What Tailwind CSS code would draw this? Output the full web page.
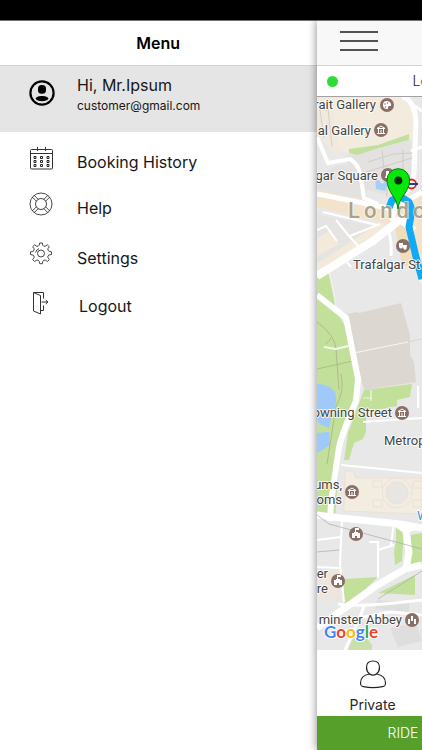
<!DOCTYPE html>
<html lang="en">
<head>
  <meta charset="UTF-8">
  <meta name="viewport" content="width=device-width, initial-scale=1">
  <title>Menu</title>
  <script src="https://cdn.jsdelivr.net/npm/@tailwindcss/browser@4"></script>
</head>
<body class="min-h-screen flex flex-col bg-white font-[Inter,sans-serif] text-neutral-900 overflow-x-hidden">
  <div class="h-5 bg-black shrink-0"></div>

  <div class="flex-1 flex overflow-hidden">
    <!-- Drawer -->
    <aside class="w-3/4 flex flex-col">
      <header class="h-[46px] flex items-center justify-center border-t border-b border-t-neutral-500 border-b-neutral-300">
        <h1 class="text-base font-semibold text-black">Menu</h1>
      </header>

      <section class="h-[66px] bg-[#e5e5e5] flex items-start gap-[21px] pt-[7px] pl-7">
        <svg class="size-7 shrink-0 mt-[6px]" viewBox="0 0 28 28" fill="none">
          <circle cx="14" cy="14" r="11.6" stroke="#000" stroke-width="2.2"/>
          <rect x="10" y="6" width="8" height="8.800" rx="3.600" fill="#000"/>
          <path d="M7.500 19.800C8 17.700 11 16.900 14 16.900s6 .8 6.500 2.900c-.8 1.700-3.500 2.400-6.500 2.400s-5.700-.7-6.500-2.400z" fill="#000"/>
        </svg>
        <div>
          <p class="text-base leading-6">Hi, Mr.Ipsum</p>
          <p class="text-xs leading-[18px]">customer@gmail.com</p>
        </div>
      </section>

      <nav class="pt-[6px] text-base">
        <a href="#history" class="h-12 flex items-center gap-6 pl-[29px]">
          <svg class="size-6 shrink-0 mb-2" viewBox="0 0 24 24" fill="none" stroke="#333" stroke-width="1">
            <rect x="1.500" y="3.500" width="22" height="19.500" rx="1"/>
            <path d="M1.500 7.500h22M8.500 1v4M16.500 1v4"/>
            <g stroke="#222">
              <path d="M5 10.500h2v2H5zM11.500 10.500h2v2h-2zM18 10.500h2v2h-2zM5 14.500h2v2H5zM11.500 14.500h2v2h-2zM18 14.500h2v2h-2zM5 18.500h2v2H5zM11.500 18.500h2v2h-2zM18 18.500h2v2h-2z"/>
            </g>
          </svg>
          <span>Booking History</span>
        </a>
        <a href="#help" class="h-11 flex items-center gap-6 pl-[29px]">
          <svg class="size-6 shrink-0 mb-2" viewBox="0 0 24 24" fill="none" stroke="#333" stroke-width=".9">
            <circle cx="12" cy="12" r="11"/>
            <circle cx="12" cy="12" r="5.500"/>
            <path d="M3.400 5.200l4.200 4.200M5.200 3.400l4.200 4.200M20.600 5.200l-4.200 4.200M18.800 3.400l-4.200 4.200M3.400 18.800l4.200-4.200M5.200 20.600l4.200-4.200M20.600 18.800l-4.200-4.200M18.800 20.600l-4.200-4.200"/>
          </svg>
          <span>Help</span>
        </a>
        <a href="#settings" class="h-14 flex items-center gap-6 pl-[29px]">
          <svg class="size-6 shrink-0 mb-2" viewBox="0 0 24 24" fill="none" stroke="#333" stroke-width=".9" stroke-linejoin="round">
            <path d="M10.700 1h2.600q.2 2.800 1.500 3.300t3.600-1.500l1.900 1.900q-2 2.200-1.400 3.500t3.600 1.700v2.600q-3 .2-3.600 1.500t1.400 3.600l-1.900 1.900q-2.200-2-3.500-1.400t-1.600 3.600h-2.600q-.3-3-1.600-3.600t-3.500 1.400l-1.900-1.900q2-2.200 1.400-3.500t-3.600-1.600v-2.600q3-.3 3.600-1.600t-1.400-3.600l1.900-1.900q2.200 2 3.500 1.500t1.600-3.300z"/>
            <circle cx="12" cy="11.500" r="3.500"/>
            <path d="M6.600 10.500A5.600 5.600 0 0 1 10 6.600"/>
          </svg>
          <span>Settings</span>
        </a>
        <a href="#logout" class="h-10 flex items-center gap-[26px] pl-[29px]">
          <svg class="size-6 shrink-0 mb-[6px]" viewBox="0 0 24 24" fill="none" stroke="#333" stroke-width="1">
            <path d="M4.500 1.500v18.500l7 3V4.500zM4.500 1.500h10v6M11.500 19.500h3v-5M12.500 11h6.500M16.800 9l2.200 2-2.200 2"/>
          </svg>
          <span>Logout</span>
        </a>
      </nav>
    </aside>

    <!-- Page pushed aside by the drawer -->
    <main class="flex-1 min-w-0 flex flex-col bg-white overflow-hidden shadow-[-1px_0_8px_rgba(0,0,0,0.4)]">
      <header class="h-[46px] shrink-0 bg-[#f8f8f8] border-t border-b border-t-neutral-500 border-b-neutral-300 flex items-center pl-[23px]">
        <button type="button" aria-label="Open menu" class="w-[38px] flex flex-col gap-[7px] pb-[5px]">
          <span class="h-[2px] bg-neutral-600"></span>
          <span class="h-[2px] bg-neutral-600"></span>
          <span class="h-[2px] bg-neutral-600"></span>
        </button>
      </header>

      <div class="h-[31px] shrink-0 flex items-center gap-[75px] pl-[10px] border-b border-neutral-400">
        <span class="size-[11px] shrink-0 rounded-full bg-[#2fdb35]"></span>
        <span class="text-sm font-light whitespace-nowrap text-neutral-800">Lo</span>
      </div>

      <div class="flex-1 min-h-[553px] overflow-hidden bg-[#e8e8e8]">
        <svg class="h-[553px] w-[400px]" viewBox="317 97 400 553" font-family="Roboto, sans-serif">
          <rect x="317" y="97" width="400" height="553" fill="#e8e8e8"/>

          <!-- built-up areas -->
          <path d="M331 97h71l11 14v27l-60 17-14-5z" fill="#f4ebdf"/>
          <path d="M317 97h13l11 62-24-22z" fill="#f0e9dd"/>
          <path d="M346 155l65-15v45l-15 12-42-10z" fill="#e3e2e1"/>
          <path d="M317 176l20-10 25-4 6 38-51-10z" fill="#e3e2e1"/>
          <path d="M317 190l77 16 28-16v65l-28-30-77-18z" fill="#f3e3cb"/>
          <path d="M317 214l62 14-62 35z" fill="#e6e4e2"/>
          <path d="M317 238l14-8 8 14-22 12z" fill="#f4eadb"/>
          <path d="M394 222l17 5 7 45-16-8z" fill="#f1dcbc"/>
          <path d="M317 264l64-42 7 8-71 48z" fill="#f4eadb"/>

          <!-- parks and water -->
          <path d="M349 149l29-4 31-11v6l-30 8-22 7-8-2z" fill="#c3df9e"/>
          <path d="M317 278l11-7 9 42 16 26 5 52-18 60-5 67h-18z" fill="#c2e09a"/>
          <path d="M317 384c8 0 14 3 18 8 2 7 1 15-2 19l-4 17-8-3-4-4zM317 433l12-1 1 13-8 5-5 3z" fill="#9fc8fb"/>
          <path d="M364 390l48-6-2 13-13 3v6l-31 6v20l-3 7-9 4-5 17h-5l4-27z" fill="#c2e09a"/>
          <path d="M317 322q18 13 19 27l3 41M317 369l36-8M341 374q4 17-5 32l-9 58M326 344l5-6" stroke="#a9a985" stroke-width=".7" fill="none"/>
          <path d="M324 347l12 2 12-3" stroke="#f4f7ee" stroke-width="2" fill="none"/>
          <path d="M329 272q5 17 7 36M363 398h9M371 390v11" stroke="#eef5e2" stroke-width="1.200" fill="none"/>

          <!-- large blocks -->
          <path d="M345 315l10-3 4 1 42-10 7 25 2 7v20l4 7 2 20-52 8z" fill="#dcd7d1"/>
          <path d="M354 353l54-11" stroke="#f8f5ee" stroke-width="1.200"/>
          <path d="M408 342l14-3" stroke="#d8d4d0" stroke-width="1"/>
          <g fill="#f2ece1" stroke="#e8dfd2" stroke-width=".8">
            <path d="M345 471h8l3 7h66v36l-78-3z"/>
            <circle cx="397" cy="493" r="15"/>
            <circle cx="397" cy="493" r="11" fill="#e8e6e2"/>
            <path d="M373 481h9v6h-9zM373 500h9v7h-9zM413 481h9v7h-9zM413 500h9v7h-9z"/>
          </g>
          <path d="M317 571h23v29h-23z" fill="#eee6dd"/>
          <path d="M396 528l8 2-2 31-7 4-1-14 2-9zM411 535l11-2v32l-8 2-5-5z" fill="#c2e09a"/>
          <path d="M344 579l34-2-24 23-10 3zM384 590l31-15v20l-37-2z" fill="#c2e09a"/>
          <path d="M348 650l8-20 4-2 12 17v5z" fill="#c9dfac"/>
          <path d="M377 600l32 3v9l-34-3zM390 628l26-5 6 18-24 6z" fill="#dedede"/>

          <!-- roads -->
          <g fill="none" stroke="#fff">
            <path d="M402 94q13 9 14 27l-2 53q-3 17-16 25l-6 22" stroke-width="5"/>
            <path d="M317 137l11 26 22-4q8 5 10 14l4 25 14 6" stroke-width="4"/>
            <path d="M402 97l20 14M411 151l11-4" stroke-width="3"/>
            <path d="M317 194l76 15 29-17" stroke-width="5"/>
            <path d="M323 212l54 13M349 236l-13-16M349 236l12 13M350 236l30-12M317 230l9-4 11 15" stroke-width="2"/>
            <path d="M345 260l6 7" stroke-width="2"/>
            <path d="M317 276l56-35 28-22 13 12" stroke-width="8"/>
            <path d="M388 231q4 8 3 25M414 260l8 22" stroke-width="3"/>
            <path d="M317 295l29 23 12 61-2 22q-13 30-17 46l-8 56-1 18" stroke-width="6"/>
            <path d="M341 465l81 8M363 422l59-4M418 386v22" stroke-width="2"/>
            <path d="M317 515l24 3 59 6 22 4" stroke-width="7"/>
            <path d="M342 519l-2 45 4 38M317 540l24-3M317 567l23 1M369 542h9v36M378 550l16-5M394 522l-3 23" stroke-width="2"/>
            <path d="M405 525l4 27-3 17M422 565l-17 4-29 17-59 42" stroke-width="7"/>
            <path d="M395 525l10 7 15-5" stroke-width="3"/>
            <path d="M338 604q20 4 84-4M364 606l-5 14-14 30M359 618l32-6 31 3" stroke-width="3"/>
          </g>
          <path d="M317 515l12 9 93 25M378 599l44-28M317 552l22-2" stroke="#aaa" stroke-width=".7" fill="none"/>
          <path d="M327 99l5 47M319 103l5 35M368 162l25-8 19-1M366 172l46-14M382 150l5 47M403 150v30" stroke="#c9c3ba" stroke-width=".7" fill="none"/>
          <path d="M375 176l7 8 8-6-5 13-9-2zM399 180l9-5-3 10z" fill="#a6cff7"/>

          <!-- place badges -->
          <g fill="#8a6f67">
            <circle cx="387" cy="105" r="7"/>
            <circle cx="381" cy="130" r="7"/>
            <circle cx="388" cy="175" r="7"/>
            <circle cx="403" cy="246" r="7"/>
            <circle cx="402" cy="413" r="7"/>
            <circle cx="352" cy="492" r="7"/>
            <circle cx="356" cy="534" r="7"/>
            <circle cx="338" cy="581" r="7"/>
            <circle cx="412" cy="620" r="7"/>
          </g>
          <path d="M387 101a4 4 0 1 0 0 8c2 0 0-2 2-3h2a4 4 0 0 0-4-5z" fill="#fff"/>
          <g fill="#8a6f67"><circle cx="385" cy="104" r=".8"/><circle cx="387.500" cy="103" r=".8"/><circle cx="385.500" cy="107" r=".8"/></g>
          <g fill="none" stroke="#fff" stroke-width="1">
            <path d="M377 128.500l4-2.500 4 2.500zM378.500 129v4M383.500 129v4M377 133.500h8M381 130v3"/>
            <path d="M398 411.500l4-2.500 4 2.500zM399.500 412v4M404.500 412v4M398 416.500h8M402 413v3"/>
            <path d="M348 490.500l4-2.500 4 2.500zM349.500 491v4M354.500 491v4M348 495.500h8M352 492v3"/>
          </g>
          <g fill="#fff">
            <path d="M352 538v-5h2v-1h1v-4h4v2h-3v2h2v1h2v5h-3v-2h-2v2z"/>
            <path d="M334 585v-5h2v-1h1v-4h4v2h-3v2h2v1h2v5h-3v-2h-2v2z"/>
            <path d="M408 619h2v5h-2zM411 616h2v5h-2zM414 619h2v5h-2z"/>
            <path d="M399 243h4v4q-2 3-4 0zM403 245h4l-.5 4q-2 2-3.500-1z"/>
            <path d="M386 171h3v3l2 4h-6l1-3z"/>
          </g>

          <!-- route -->
          <path d="M389 208l3-8 9-3 8 5 3 8-3 17 7 30 6 22" fill="none" stroke="#12a9f5" stroke-width="7" stroke-linejoin="round"/>

          <text x="348" y="218" font-size="22" font-weight="500" letter-spacing="4" fill="#a2967d" fill-opacity=".9" stroke="#fff" stroke-opacity=".6" stroke-width="2" paint-order="stroke">Londo</text>

          <!-- underground sign -->
          <circle cx="411.500" cy="184" r="4.500" fill="#fff" stroke="#dc241f" stroke-width="1.800"/>
          <path d="M405 184h13" stroke="#1c3f94" stroke-width="2"/>

          <!-- pickup pin -->
          <path d="M398 209c-1-12-11-17-11-29a11.300 11.300 0 0 1 22.600 0c0 12-10.600 17-11.600 29z" fill="#08e60b" stroke="#087a10" stroke-width="1"/>
          <circle cx="398.300" cy="180.500" r="4" fill="#082c08"/>

          <!-- place names -->
          <g font-size="13" fill="#454545" stroke="#fff" stroke-opacity=".8" stroke-width="2" stroke-linejoin="round" paint-order="stroke">
            <g text-anchor="end">
              <text x="376" y="109">rait Gallery</text>
              <text x="371" y="135">al Gallery</text>
              <text x="378" y="180">gar Square</text>
              <text x="392" y="417">owning Street</text>
              <text x="342" y="489">ums,</text>
              <text x="342" y="504">oms</text>
              <text x="328" y="578">er</text>
              <text x="328" y="593">re</text>
              <text x="402" y="624">minster Abbey</text>
            </g>
            <text x="353" y="269">Trafalgar St</text>
            <text x="384" y="445">Metrop</text>
            <text x="417" y="520" fill="#3b9bd4">W</text>
          </g>

          <text x="324" y="638" font-family="Lato, sans-serif" font-size="17" font-weight="700" stroke="#fff" stroke-width="2" paint-order="stroke"><tspan fill="#4285f4">G</tspan><tspan fill="#ea4335">o</tspan><tspan fill="#fbbc05">o</tspan><tspan fill="#4285f4">g</tspan><tspan fill="#34a853">l</tspan><tspan fill="#ea4335">e</tspan></text>
        </svg>
      </div>

      <button type="button" class="h-[66px] shrink-0 w-28 flex flex-col items-center justify-end gap-1 text-sm text-neutral-800">
        <svg class="size-8" viewBox="0 0 32 32" fill="none" stroke="#222" stroke-width="1.200">
          <path d="M12.500 16c-1.800-1.500-3-3.600-3-6.500 0-3.900 2.500-6.500 6.500-6.500s6.500 2.600 6.500 6.500c0 2.900-1.200 5-3 6.500 5 .8 9 3.700 9 9 0 2.600-.5 3.200-3 3.700-5 1-14 1-19 0-2.500-.5-3-1.100-3-3.700 0-5.300 4-8.200 9-9z"/>
          <path d="M12.500 16q3.500 2.400 7 0"/>
        </svg>
        <span class="leading-[22px]">Private</span>
      </button>
      <button type="button" class="h-[34px] shrink-0 bg-[#569f2b] text-white text-sm font-light text-left pl-[71px] whitespace-nowrap">RIDE</button>
    </main>
  </div>
</body>
</html>
